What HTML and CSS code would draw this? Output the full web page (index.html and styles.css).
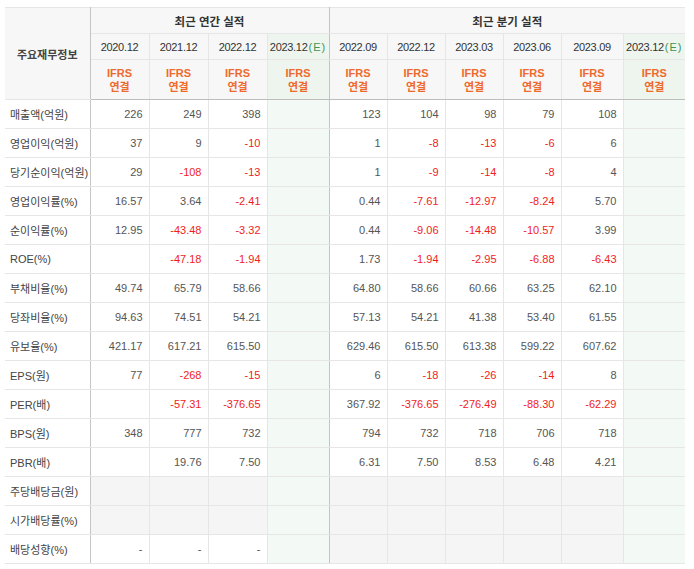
FILE: index.html
```html
<!DOCTYPE html>
<html lang="ko">
<head>
<meta charset="utf-8">
<title>주요재무정보</title>
<link rel="stylesheet" href="styles.css">
</head>
<body>
<div class="wrap">
<div class="unit">(단위 : 억원, %, 배, 주)</div>
<table class="fin">
<colgroup>
<col class="c-label"><col class="c-a"><col class="c-a"><col class="c-a"><col class="c-e">
<col class="c-q"><col class="c-q"><col class="c-q"><col class="c-q"><col class="c-e"><col class="c-e">
</colgroup>
<thead>
<tr class="h1">
<th rowspan="3" class="lab-h">주요재무정보</th>
<th colspan="4" class="grp-h div">최근 연간 실적</th>
<th colspan="6" class="grp-h">최근 분기 실적</th>
</tr>
<tr class="h2">
<th>2020.12</th><th>2021.12</th><th>2022.12</th><th class="est div">2023.12<span class="e">(E)</span></th>
<th>2022.09</th><th>2022.12</th><th>2023.03</th><th>2023.06</th><th>2023.09</th><th class="est">2023.12<span class="e">(E)</span></th>
</tr>
<tr class="h3">
<th class="ifrs">IFRS<br>연결</th><th class="ifrs">IFRS<br>연결</th><th class="ifrs">IFRS<br>연결</th><th class="ifrs est div">IFRS<br>연결</th>
<th class="ifrs">IFRS<br>연결</th><th class="ifrs">IFRS<br>연결</th><th class="ifrs">IFRS<br>연결</th><th class="ifrs">IFRS<br>연결</th><th class="ifrs">IFRS<br>연결</th><th class="ifrs est">IFRS<br>연결</th>
</tr>
</thead>
<tbody>
<tr class="first"><th>매출액(억원)</th><td>226</td><td>249</td><td>398</td><td class="est div"></td><td>123</td><td>104</td><td>98</td><td>79</td><td>108</td><td class="est"></td></tr>
<tr><th>영업이익(억원)</th><td>37</td><td>9</td><td class="neg">-10</td><td class="est div"></td><td>1</td><td class="neg">-8</td><td class="neg">-13</td><td class="neg">-6</td><td>6</td><td class="est"></td></tr>
<tr><th>당기순이익(억원)</th><td>29</td><td class="neg">-108</td><td class="neg">-13</td><td class="est div"></td><td>1</td><td class="neg">-9</td><td class="neg">-14</td><td class="neg">-8</td><td>4</td><td class="est"></td></tr>
<tr class="grp"><th>영업이익률(%)</th><td>16.57</td><td>3.64</td><td class="neg">-2.41</td><td class="est div"></td><td>0.44</td><td class="neg">-7.61</td><td class="neg">-12.97</td><td class="neg">-8.24</td><td>5.70</td><td class="est"></td></tr>
<tr><th>순이익률(%)</th><td>12.95</td><td class="neg">-43.48</td><td class="neg">-3.32</td><td class="est div"></td><td>0.44</td><td class="neg">-9.06</td><td class="neg">-14.48</td><td class="neg">-10.57</td><td>3.99</td><td class="est"></td></tr>
<tr><th>ROE(%)</th><td></td><td class="neg">-47.18</td><td class="neg">-1.94</td><td class="est div"></td><td>1.73</td><td class="neg">-1.94</td><td class="neg">-2.95</td><td class="neg">-6.88</td><td class="neg">-6.43</td><td class="est"></td></tr>
<tr class="grp"><th>부채비율(%)</th><td>49.74</td><td>65.79</td><td>58.66</td><td class="est div"></td><td>64.80</td><td>58.66</td><td>60.66</td><td>63.25</td><td>62.10</td><td class="est"></td></tr>
<tr><th>당좌비율(%)</th><td>94.63</td><td>74.51</td><td>54.21</td><td class="est div"></td><td>57.13</td><td>54.21</td><td>41.38</td><td>53.40</td><td>61.55</td><td class="est"></td></tr>
<tr><th>유보율(%)</th><td>421.17</td><td>617.21</td><td>615.50</td><td class="est div"></td><td>629.46</td><td>615.50</td><td>613.38</td><td>599.22</td><td>607.62</td><td class="est"></td></tr>
<tr class="grp"><th>EPS(원)</th><td>77</td><td class="neg">-268</td><td class="neg">-15</td><td class="est div"></td><td>6</td><td class="neg">-18</td><td class="neg">-26</td><td class="neg">-14</td><td>8</td><td class="est"></td></tr>
<tr><th>PER(배)</th><td></td><td class="neg">-57.31</td><td class="neg">-376.65</td><td class="est div"></td><td>367.92</td><td class="neg">-376.65</td><td class="neg">-276.49</td><td class="neg">-88.30</td><td class="neg">-62.29</td><td class="est"></td></tr>
<tr><th>BPS(원)</th><td>348</td><td>777</td><td>732</td><td class="est div"></td><td>794</td><td>732</td><td>718</td><td>706</td><td>718</td><td class="est"></td></tr>
<tr><th>PBR(배)</th><td></td><td>19.76</td><td>7.50</td><td class="est div"></td><td>6.31</td><td>7.50</td><td>8.53</td><td>6.48</td><td>4.21</td><td class="est"></td></tr>
<tr class="grp"><th>주당배당금(원)</th><td class="na"></td><td class="na"></td><td class="na"></td><td class="est div"></td><td class="na"></td><td class="na"></td><td class="na"></td><td class="na"></td><td class="na"></td><td class="est"></td></tr>
<tr><th>시가배당률(%)</th><td class="na"></td><td class="na"></td><td class="na"></td><td class="est div"></td><td class="na"></td><td class="na"></td><td class="na"></td><td class="na"></td><td class="na"></td><td class="est"></td></tr>
<tr class="last"><th>배당성향(%)</th><td>-</td><td>-</td><td>-</td><td class="est div"></td><td class="na"></td><td class="na"></td><td class="na"></td><td class="na"></td><td class="na"></td><td class="est"></td></tr>
</tbody>
</table>
</div>
</body>
</html>
```
FILE: styles.css
```css
html, body {
  margin: 0;
  padding: 0;
  background: #fff;
}
body {
  font-family: "Liberation Sans", "Noto Sans CJK KR", sans-serif;
  font-size: 11px;
  color: #555;
}
.wrap {
  width: 680px;
  margin-left: 5px;
}
.unit {
  height: 7px;
  overflow: hidden;
  text-align: right;
  font-size: 11px;
  line-height: 11px;
  color: #666;
  visibility: hidden;
}
.fin {
  width: 680px;
  table-layout: fixed;
  border-collapse: collapse;
  border-top: 1px solid #bdbdbd;
  border-bottom: 1px solid #bdbdbd;
}
.c-label { width: 85px; }
.c-a { width: 59px; }
.c-e { width: 62px; }
.c-q { width: 58px; }

.fin th, .fin td {
  border: 1px solid #e6e6e6;
  padding: 0;
  white-space: nowrap;
}
.fin tr > :first-child { border-left: none; }
.fin tr > :last-child { border-right: none; }

.fin thead th {
  background: #f7f7f7;
  color: #333;
  font-weight: normal;
  text-align: center;
}
.fin thead .lab-h {
  border-right: 1px solid #c4c4c4;
  color: #444;
  font-weight: bold;
}
.fin .h1 { height: 26px; }
.fin .h2 { height: 26px; }
.fin .h3 { height: 40px; }
.fin .grp-h {
  font-weight: bold;
  color: #333;
  font-size: 11.5px;
}
.fin .h2 th { letter-spacing: -0.3px; }
.fin thead .est { background: #eef5ef; }
.e {
  color: #3f9650;
  letter-spacing: 1px;
  margin-left: 1px;
}
.ifrs {
  font-weight: bold;
  line-height: 14px;
}
.fin thead th.ifrs { color: #ee6a2c; font-weight: bold; }
.fin thead tr.h3 th { border-bottom: 1px solid #bdbdbd; }

.fin tbody tr { height: 29px; }
.fin tbody th {
  text-align: left;
  font-weight: normal;
  color: #444;
  padding-left: 5px;
  border-right: 1px solid #c4c4c4;
}
.fin tbody td {
  text-align: right;
  padding-right: 6px;
  color: #555;
}
.fin .div { border-right: 1px solid #c4c4c4; }
.fin tbody td.est { background: #f3f9f4; }
.fin td.neg { color: #f01d1d; }
.fin td.na { background: #f5f5f5; }
.fin tr.grp th, .fin tr.grp td { border-top: 1px solid #c4c4c4; }
```
